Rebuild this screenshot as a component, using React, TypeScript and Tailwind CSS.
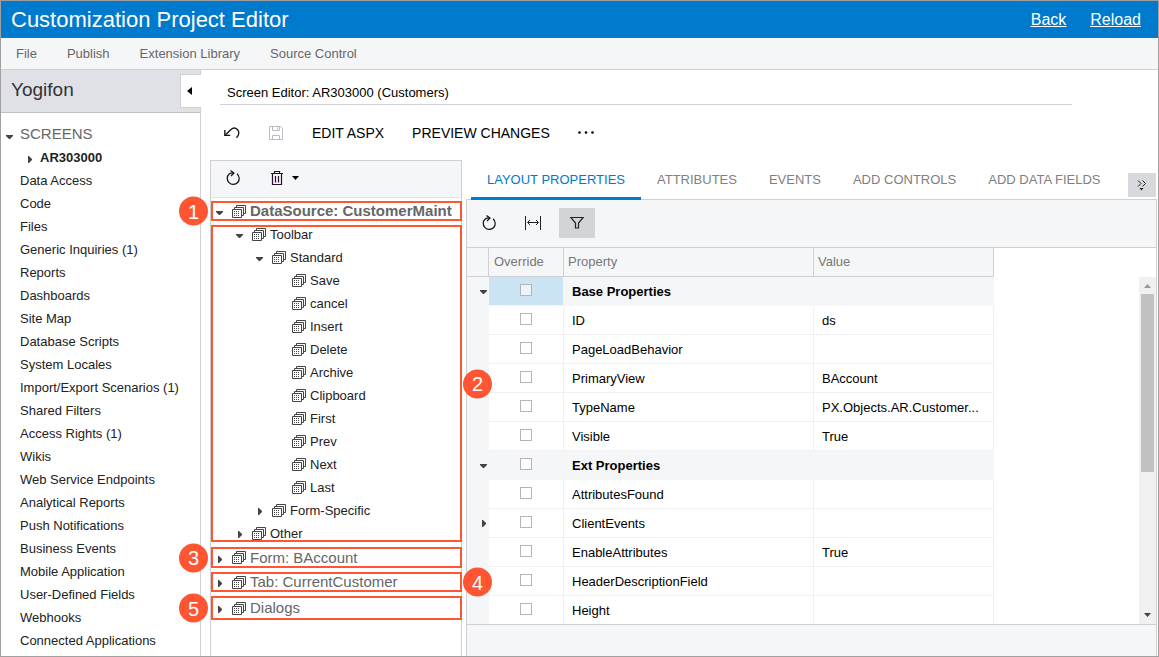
import type { ReactNode } from "react";
import clsx from "clsx";

type TreeNode = {
  label: string;
  level: number;
  state?: "open" | "closed";
};

type PropertyRow = {
  name: string;
  value?: string;
  group?: boolean;
  state?: "open" | "closed";
};

const menuItems = ["File", "Publish", "Extension Library", "Source Control"];

const sidebarItems = [
  "Data Access",
  "Code",
  "Files",
  "Generic Inquiries (1)",
  "Reports",
  "Dashboards",
  "Site Map",
  "Database Scripts",
  "System Locales",
  "Import/Export Scenarios (1)",
  "Shared Filters",
  "Access Rights (1)",
  "Wikis",
  "Web Service Endpoints",
  "Analytical Reports",
  "Push Notifications",
  "Business Events",
  "Mobile Application",
  "User-Defined Fields",
  "Webhooks",
  "Connected Applications",
];

const treeNodes: TreeNode[] = [
  { label: "Toolbar", level: 1, state: "open" },
  { label: "Standard", level: 2, state: "open" },
  { label: "Save", level: 3 },
  { label: "cancel", level: 3 },
  { label: "Insert", level: 3 },
  { label: "Delete", level: 3 },
  { label: "Archive", level: 3 },
  { label: "Clipboard", level: 3 },
  { label: "First", level: 3 },
  { label: "Prev", level: 3 },
  { label: "Next", level: 3 },
  { label: "Last", level: 3 },
  { label: "Form-Specific", level: 2, state: "closed" },
  { label: "Other", level: 1, state: "closed" },
];

const tabs = ["LAYOUT PROPERTIES", "ATTRIBUTES", "EVENTS", "ADD CONTROLS", "ADD DATA FIELDS"];

const properties: PropertyRow[] = [
  { name: "Base Properties", group: true, state: "open" },
  { name: "ID", value: "ds" },
  { name: "PageLoadBehavior" },
  { name: "PrimaryView", value: "BAccount" },
  { name: "TypeName", value: "PX.Objects.AR.Customer..." },
  { name: "Visible", value: "True" },
  { name: "Ext Properties", group: true, state: "open" },
  { name: "AttributesFound" },
  { name: "ClientEvents", state: "closed" },
  { name: "EnableAttributes", value: "True" },
  { name: "HeaderDescriptionField" },
  { name: "Height" },
];

function Caret({ state }: { state?: "open" | "closed" }) {
  return (
    <svg width="8" height="8" viewBox="0 0 8 8" fill="#444" className="shrink-0" aria-hidden="true">
      {state === "open" && <path d="M1 2h7v1L5 6H4L1 3z" />}
      {state === "closed" && <path d="M3 0h1l3 3v1L4 7H3z" />}
    </svg>
  );
}

function SheetsIcon() {
  return (
    <svg width="14" height="13" viewBox="0 0 14 13" fill="none" stroke="#444" className="shrink-0" aria-hidden="true">
      <path d="M0.500 4.500h9v8h-9z" />
      <path d="M2.500 4V2.500h9v8H10" />
      <path d="M4.500 2V0.500h9v8H12" />
      <path d="M2 6.500h6M2 8.500h6M2 10.500h6" strokeDasharray="1 1" />
    </svg>
  );
}

function RefreshIcon() {
  return (
    <svg width="16" height="16" viewBox="0 0 16 16" fill="none" stroke="#111" strokeWidth="1.200" aria-hidden="true">
      <path d="M12 3.800A6 6 0 1 1 4.200 4Q6 2.800 9 3" />
      <path d="M5.500 0.500L9 3 6 6" />
    </svg>
  );
}

function UndoIcon() {
  return (
    <svg width="16" height="16" viewBox="0 0 16 16" fill="none" stroke="#111" strokeWidth="1.300" aria-hidden="true">
      <path d="M1.500 9.800L7 4.500c2-1.900 4.600-1.800 6.400 0 2 2 2.100 5.300-0.900 8.300" />
      <path d="M0.800 5v5.300h5.400" />
    </svg>
  );
}

function SaveIcon() {
  return (
    <svg width="16" height="16" viewBox="0 0 16 16" fill="none" stroke="#bdb8c2" aria-hidden="true">
      <path d="M1.500 1.500h11l2 2v11h-13z" />
      <path d="M4.500 1.500v4h7v-4M9.500 2.500v2" />
      <path d="M4.500 14.500v-4h7v4" />
    </svg>
  );
}

function TrashIcon() {
  return (
    <svg width="12" height="16" viewBox="0 0 12 16" fill="none" stroke="#2a1030" strokeWidth="1.200" aria-hidden="true">
      <path d="M0 3.500h12M3.500 3V1.500h5V3" />
      <path d="M1.500 4v10.500h9V4" />
      <path d="M4.500 6v6.500M7.500 6v6.500" />
    </svg>
  );
}

function FitIcon() {
  return (
    <svg width="16" height="14" viewBox="0 0 16 14" fill="none" stroke="#222" aria-hidden="true">
      <path d="M0.500 0v14M15.500 0v14M3 6.500h10" />
      <path d="M5 4L2.500 6.500 5 9M11 4l2.500 2.500L11 9" />
    </svg>
  );
}

function FilterIcon() {
  return (
    <svg width="14" height="14" viewBox="0 0 14 14" fill="none" stroke="#222" strokeWidth="1.200" aria-hidden="true">
      <path d="M0.800 1.500h12.400L8.500 7v5h-3V7z" />
    </svg>
  );
}

function Badge({ side, children }: { side: "left" | "right"; children: ReactNode }) {
  return (
    <span
      className={clsx(
        "absolute top-1/2 z-10 flex size-[29px] -translate-y-1/2 items-center justify-center rounded-full bg-[#ff5533] text-xl font-normal text-white",
        side === "left" ? "-left-[34px]" : "-right-8"
      )}
    >
      {children}
    </span>
  );
}

function TreeRoot({ label, state, bold }: { label: string; state: "open" | "closed"; bold?: boolean }) {
  return (
    <button
      type="button"
      className={clsx("flex h-full items-center pl-0.5 text-[15px] leading-4 whitespace-nowrap text-[#666]", bold && "font-bold")}
    >
      <span className="pt-1">
        <Caret state={state} />
      </span>
      <span className="mr-1 ml-[9px]">
        <SheetsIcon />
      </span>
      {label}
    </button>
  );
}

function Sidebar() {
  return (
    <aside className="w-[200px] shrink-0 border-r border-[#cfcfd4]">
      <div className="flex h-[43px] items-start justify-between border-b border-[#bfbfc4] bg-[#dfe1e7]">
        <h2 className="pl-[10px] text-[19px] leading-10 text-[#333]">Yogifon</h2>
        <button
          type="button"
          aria-label="Collapse"
          className="-mr-px mt-1 flex h-[34px] w-[21px] items-center border border-r-0 border-[#cfcfd4] bg-white pl-1.5"
        >
          <svg width="5" height="8" viewBox="0 0 5 8" fill="#000" aria-hidden="true">
            <path d="M5 0v8L0 4z" />
          </svg>
        </button>
      </div>

      <nav className="pt-[9px] text-[13px] text-[#222]">
        <a href="#screens" className="flex h-6 items-center pl-1 text-[15px] text-[#666]">
          <span className="pt-1.5">
            <Caret state="open" />
          </span>
          <span className="pl-[7px]">SCREENS</span>
        </a>
        <a href="#ar303000" className="flex h-[23px] items-center pl-6 font-bold">
          <span className="pt-1">
            <Caret state="closed" />
          </span>
          <span className="pl-[7px]">AR303000</span>
        </a>
        {sidebarItems.map((item) => (
          <a key={item} href="#" className="flex h-[23px] items-center pl-[19px] whitespace-nowrap">
            {item}
          </a>
        ))}
      </nav>
    </aside>
  );
}

function ControlTree() {
  return (
    <section className="flex w-[252px] shrink-0 flex-col border border-b-0 border-[#cfcfd4]">
      <div className="flex h-[37px] shrink-0 items-center border-b border-[#e1e2e6] bg-[#f5f6f8] pb-0.5 pl-[14px]">
        <button type="button" aria-label="Refresh">
          <RefreshIcon />
        </button>
        <button type="button" aria-label="Delete" className="ml-[30px] flex items-center gap-[9px]">
          <TrashIcon />
          <svg width="7" height="4" viewBox="0 0 7 4" fill="#000" aria-hidden="true">
            <path d="M0 0h7L3.500 4z" />
          </svg>
        </button>
      </div>

      <div className="-mr-px pt-[3px]">
        <div className="relative h-5 border-2 border-[#ff5533]">
          <Badge side="left">1</Badge>
          <TreeRoot label="DataSource: CustomerMaint" state="open" bold />
        </div>

        <div className="relative mt-1 border-2 border-[#ff5533]">
          <Badge side="right">2</Badge>
          <ul className="-mt-1 -mb-[5px] text-[13px] text-[#222]">
            {treeNodes.map((node) => (
              <li
                key={node.label}
                className={clsx("flex h-[23px] items-center", {
                  "pl-[22px]": node.level === 1,
                  "pl-[42px]": node.level === 2,
                  "pl-[62px]": node.level === 3,
                })}
              >
                <span className="pt-0.5">
                  <Caret state={node.state} />
                </span>
                <span className="mr-1 ml-[9px]">
                  <SheetsIcon />
                </span>
                {node.label}
              </li>
            ))}
          </ul>
        </div>

        <div className="relative mt-[5px] h-[21px] border-2 border-[#ff5533]">
          <Badge side="left">3</Badge>
          <TreeRoot label="Form: BAccount" state="closed" />
        </div>
        <div className="relative mt-1 h-5 border-2 border-[#ff5533]">
          <Badge side="right">4</Badge>
          <TreeRoot label="Tab: CurrentCustomer" state="closed" />
        </div>
        <div className="relative mt-1 h-6 border-2 border-[#ff5533]">
          <Badge side="left">5</Badge>
          <TreeRoot label="Dialogs" state="closed" />
        </div>
      </div>
    </section>
  );
}

function PropertyTable() {
  return (
    <table className="w-[527px] table-fixed border-separate border-spacing-0 text-left text-[13px]">
      <colgroup>
        <col className="w-[22px]" />
        <col className="w-[75px]" />
        <col className="w-[250px]" />
        <col className="w-[180px]" />
      </colgroup>
      <thead>
        <tr className="h-[29px] bg-[#f5f6f8] text-[#777]">
          <th className="border-r border-b border-[#cfcfd4] p-0"></th>
          <th className="border-r border-b border-[#cfcfd4] p-0 pl-[5px] font-normal">Override</th>
          <th className="border-r border-b border-[#cfcfd4] p-0 pl-1 font-normal">Property</th>
          <th className="border-r border-b border-[#cfcfd4] p-0 pl-1 font-normal">Value</th>
        </tr>
      </thead>
      <tbody>
        {properties.map((row, index) => {
          const line = row.group ? "border-[#f5f6f8]" : "border-[#f1f1f3]";
          return (
            <tr key={row.name} className={clsx("h-[29px]", row.group && "bg-[#f5f6f8] font-bold")}>
              <td className="bg-[#f5f6f8] p-0 pl-3">
                <Caret state={row.state} />
              </td>
              <td className={clsx("border-r border-b p-0", line, index === 0 && "bg-[#cbe4f3]")}>
                <input
                  type="checkbox"
                  aria-label={"Override " + row.name}
                  className="mx-auto mb-[3px] block size-3 appearance-none border border-[#b5b5b5] bg-white/60"
                />
              </td>
              <td className={clsx("border-r border-b p-0 pt-0.5 pl-2", line)}>{row.name}</td>
              <td className={clsx("border-r border-b p-0 pt-0.5 pl-2 whitespace-nowrap", line)}>{row.value}</td>
            </tr>
          );
        })}
      </tbody>
    </table>
  );
}

function PropertyPanel() {
  return (
    <section className="ml-1 flex min-w-0 flex-1 flex-col">
      <div className="flex h-[39px] shrink-0 items-end justify-between pr-px pl-[5px]">
        <div role="tablist" className="-mb-px flex text-[13px] whitespace-nowrap text-[#808080]">
          {tabs.map((tab, index) => (
            <button
              key={tab}
              type="button"
              role="tab"
              aria-selected={index === 0}
              className={clsx(
                "relative z-10 h-[35px] border-b-3 px-4 pb-0.5",
                index === 0 ? "border-[#007acc] text-[#007acc]" : "border-transparent"
              )}
            >
              {tab}
            </button>
          ))}
        </div>
        <button type="button" aria-label="More tabs" className="mb-0.5 flex h-6 w-7 shrink-0 items-center justify-center bg-[#d8d9dd]">
          <svg width="10" height="12" viewBox="0 0 10 12" fill="none" stroke="#222" aria-hidden="true">
            <path d="M1 1.500L4 4.500 1 7.500M5.500 1.500l3 3-3 3" />
            <path d="M2.500 9h4L4.500 11.500z" fill="#222" stroke="none" />
          </svg>
        </button>
      </div>

      <div className="flex min-h-0 flex-1 flex-col border border-b-0 border-[#cfcfd4]">
        <div className="flex h-12 shrink-0 items-center border-b border-[#cfcfd4] bg-[#f5f6f8] pb-px pl-[14px]">
          <button type="button" aria-label="Refresh">
            <RefreshIcon />
          </button>
          <button type="button" aria-label="Fit columns" className="ml-7">
            <FitIcon />
          </button>
          <button type="button" aria-label="Filter" className="ml-[18px] flex h-[30px] w-9 items-center justify-center bg-[#d3d4d8]">
            <FilterIcon />
          </button>
        </div>

        <div className="flex min-h-0 flex-1 justify-between overflow-hidden">
          <PropertyTable />
          <div className="mt-[29px] flex w-[17px] flex-col items-center bg-[#f0f0f0]">
            <svg width="7" height="4" viewBox="0 0 7 4" fill="#999" className="mt-[7px] shrink-0" aria-hidden="true">
              <path d="M0 4h7L3.500 0z" />
            </svg>
            <div className="mt-1.5 h-[178px] w-[13px] shrink-0 bg-[#c1c1c1]" />
            <svg width="7" height="4" viewBox="0 0 7 4" fill="#444" className="mt-auto mb-[7px] shrink-0" aria-hidden="true">
              <path d="M0 0h7L3.500 4z" />
            </svg>
          </div>
        </div>

        <div className="h-8 shrink-0 border-t border-[#cfcfd4] bg-[#f5f6f8]" />
      </div>
    </section>
  );
}

export default function App() {
  return (
    <div className="flex h-screen flex-col overflow-hidden border border-[#a0a0a0] bg-white font-['Liberation_Sans',Arial,sans-serif] text-black">
      {/* Header */}
      <header className="flex h-[37px] shrink-0 items-center justify-between bg-[#007acc] pr-[17px] pl-[10px] text-white">
        <h1 className="text-[22px]">Customization Project Editor</h1>
        <div className="flex gap-6 text-base underline">
          <a href="#back">Back</a>
          <a href="#reload">Reload</a>
        </div>
      </header>

      {/* Menu */}
      <nav className="flex h-8 shrink-0 items-center gap-[30px] border-b border-[#cfcfd4] bg-[#f5f6f8] pl-[15px] text-[13px] text-[#666]">
        {menuItems.map((item) => (
          <button key={item} type="button">
            {item}
          </button>
        ))}
      </nav>

      <div className="flex min-h-0 flex-1">
        <Sidebar />

        <main className="flex min-w-0 flex-1 flex-col">
          <div className="mr-[86px] ml-[19px] flex h-[35px] shrink-0 items-end border-b border-[#cfcfd4] pb-0.5 pl-[7px] text-[13px]">
            Screen Editor: AR303000 (Customers)
          </div>

          {/* Actions */}
          <div className="flex h-[55px] shrink-0 items-center gap-7 pl-[23px] text-sm">
            <button type="button" aria-label="Undo">
              <UndoIcon />
            </button>
            <button type="button" aria-label="Save">
              <SaveIcon />
            </button>
            <button type="button">EDIT ASPX</button>
            <button type="button">PREVIEW CHANGES</button>
            <button type="button" aria-label="More actions">
              <svg width="16" height="3" viewBox="0 0 16 3" fill="#000" aria-hidden="true">
                <circle cx="1.500" cy="1.500" r="1.300" />
                <circle cx="8" cy="1.500" r="1.300" />
                <circle cx="14.500" cy="1.500" r="1.300" />
              </svg>
            </button>
          </div>

          <div className="flex min-h-0 flex-1 pr-px pl-[9px]">
            <ControlTree />
            <PropertyPanel />
          </div>
        </main>
      </div>
    </div>
  );
}
